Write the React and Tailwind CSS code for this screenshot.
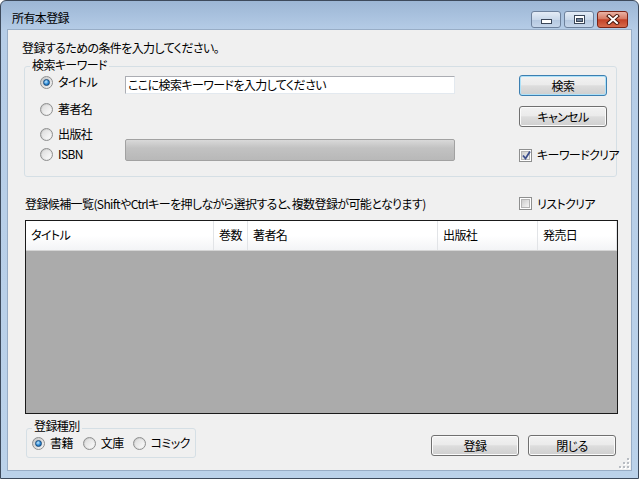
import React from 'react';

const COLUMNS = [
  { label: 'タイトル', w: 'w-[188px]' },
  { label: '巻数', w: 'w-[34px]' },
  { label: '著者名', w: 'w-[190px]' },
  { label: '出版社', w: 'w-[100px]' },
  { label: '発売日', w: 'flex-1' },
];

function Radio({ checked }) {
  return (
    <span className="flex h-[13px] w-[13px] shrink-0 items-center justify-center rounded-full border border-[#8e8f8f] bg-[linear-gradient(135deg,#c4c4c4,#f7f7f7)]">
      {checked ? (
        <span className="h-[7px] w-[7px] rounded-full border border-[#174a7c] bg-[radial-gradient(circle_at_40%_35%,#c4e8ff,#2b8ad6_55%,#0d4a8a)]" />
      ) : (
        <span className="h-[9px] w-[9px] rounded-full bg-[linear-gradient(135deg,#dcdcdc,#fbfbfb)]" />
      )}
    </span>
  );
}

function Check({ checked }) {
  return (
    <span className="flex h-[13px] w-[13px] shrink-0 items-center justify-center border border-[#8e8f8f] bg-white">
      <span className="relative flex h-[9px] w-[9px] items-center justify-center border border-[#b4b4b4] bg-[linear-gradient(135deg,#cdcdcd,#f5f5f5)]">
        {checked && (
          <svg width="11" height="11" viewBox="0 0 11 11" className="absolute -top-[2px] -left-[1px]">
            <path d="M2 5.5 L4.5 8.5 L9 1.5" fill="none" stroke="#3d4f8c" strokeWidth="1.8" />
          </svg>
        )}
      </span>
    </span>
  );
}

function Btn({ children, def }) {
  return (
    <div
      className={`flex h-[21px] w-[88px] shrink-0 items-center justify-center rounded-[3px] border bg-[linear-gradient(#f2f2f2,#ebebeb_45%,#dddddd_52%,#cfcfcf)] text-[12px] leading-none text-black ${
        def ? 'border-[#3c7fb1] shadow-[inset_0_0_0_1px_#aee1f8]' : 'border-[#707070] shadow-[inset_0_0_0_1px_#fbfbfb]'
      }`}
    >
      {children}
    </div>
  );
}

function CaptionButtons() {
  return (
    <div className="mt-[10px] flex gap-[3px] pr-[10px]">
      <div className="flex h-[17px] w-[30px] items-end justify-center rounded-[3px] border border-[#6d819c] bg-[linear-gradient(#e4ecf6,#c9d8ea_50%,#b3c7df_51%,#c6d6ea)] pb-[3px]">
        <svg width="11" height="5" viewBox="0 0 11 5">
          <rect x="0.5" y="0.5" width="10" height="4" fill="#fff" stroke="#3a4658" />
        </svg>
      </div>
      <div className="flex h-[17px] w-[30px] items-center justify-center rounded-[3px] border border-[#6d819c] bg-[linear-gradient(#e4ecf6,#c9d8ea_50%,#b3c7df_51%,#c6d6ea)]">
        <svg width="11" height="9" viewBox="0 0 11 9">
          <rect x="0.5" y="0.5" width="10" height="8" fill="#fff" stroke="#3a4658" />
          <rect x="2.5" y="3.5" width="6" height="3" fill="#6f8199" stroke="#3a4658" />
        </svg>
      </div>
      <div className="flex h-[17px] w-[31px] items-center justify-center rounded-[3px] border border-[#7b2417] bg-[linear-gradient(#eab3a5,#d77a64_45%,#c34227_52%,#d66a4c)]">
        <svg width="14" height="11" viewBox="0 0 14 11">
          <path d="M3 2 L11 9 M11 2 L3 9" stroke="#4a1509" strokeWidth="4" strokeLinecap="square" />
          <path d="M3 2 L11 9 M11 2 L3 9" stroke="#fff" strokeWidth="2" strokeLinecap="square" />
        </svg>
      </div>
    </div>
  );
}

export default function App() {
  return (
    <div
      className="flex h-[479px] w-[639px] flex-col overflow-hidden rounded-t-[6px] border border-[#3d4a5c] bg-[linear-gradient(#9cb6d5,#b6cde7_30px,#bbd2ea)] text-[12px] tracking-[-0.6px] whitespace-nowrap text-black [font-feature-settings:'palt']"
      style={{ fontFamily: '"Noto Sans CJK JP", "Noto Sans", sans-serif' }}
    >
      {/* Title bar */}
      <div className="flex h-[28px] shrink-0 items-start justify-between">
        <div className="pl-[11px] pt-[10px] text-[12px] leading-[14px]">所有本登録</div>
        <CaptionButtons />
      </div>

      {/* Client area */}
      <div className="ml-[6px] flex h-[442px] w-[625px] flex-col border border-[#98adc6] bg-[#f0f0f0]">
        <div className="pl-[14px] pt-[11px] leading-[14px]">登録するための条件を入力してください。</div>

        {/* Search group */}
        <div className="relative ml-[16px] mt-[11px] flex h-[112px] w-[593px] rounded-[3px] border border-[#d5dfe5]">
          <div className="absolute -top-[9px] left-[5px] bg-[#f0f0f0] px-[2px] leading-[14px]">検索キーワード</div>

          <div className="ml-[15px] flex w-[85px] shrink-0 flex-col">
            <div className="mt-[8px] flex h-[14px] items-center gap-[5px]"><Radio checked /><span>タイトル</span></div>
            <div className="mt-[13px] flex h-[14px] items-center gap-[5px]"><Radio /><span>著者名</span></div>
            <div className="mt-[11px] flex h-[14px] items-center gap-[5px]"><Radio /><span>出版社</span></div>
            <div className="mt-[6px] flex h-[14px] items-center gap-[5px]"><Radio /><span>ISBN</span></div>
          </div>

          <div className="flex w-[330px] shrink-0 flex-col">
            <div className="mt-[9px] flex h-[18px] items-center border border-[#abadb3] border-r-[#e3e9ef] border-b-[#e3e9ef] bg-white pl-[2px] leading-none">
              ここに検索キーワードを入力してください
            </div>
            <div className="mt-[45px] h-[22px] rounded-[2px] border border-[#a2a2a2] bg-[linear-gradient(#d9d9d9,#c2c2c2_40%,#b8b8b8)]" />
          </div>

          <div className="ml-[64px] flex w-[96px] shrink-0 flex-col">
            <div className="mt-[8px]"><Btn def>検索</Btn></div>
            <div className="mt-[10px]"><Btn>キャンセル</Btn></div>
            <div className="mt-[21px] flex h-[14px] items-center gap-[5px]"><Check checked /><span>キーワードクリア</span></div>
          </div>
        </div>

        {/* List header row */}
        <div className="mt-[19px] flex h-[16px] items-center">
          <div className="w-[511px] shrink-0 pl-[17px]">登録候補一覧(ShiftやCtrlキーを押しながら選択すると、複数登録が可能となります)</div>
          <div className="flex items-center gap-[5px]"><Check /><span>リストクリア</span></div>
        </div>

        {/* List view */}
        <div className="ml-[17px] mt-[8px] flex h-[196px] w-[593px] flex-col border border-[#1a1a1a] bg-[#ababab]">
          <div className="flex h-[30px] shrink-0 border-b border-[#d5d5d5] bg-[linear-gradient(#ffffff,#ffffff_50%,#f3f4f6)]">
            {COLUMNS.map((c) => (
              <div key={c.label} className={`${c.w} flex shrink-0 items-center border-r border-[#e2e4e7] pl-[5px]`}>
                {c.label}
              </div>
            ))}
          </div>
        </div>

        {/* Bottom row */}
        <div className="mt-[14px] flex items-start">
          <div className="relative ml-[18px] flex h-[30px] w-[170px] shrink-0 items-start rounded-[3px] border border-[#d5dfe5] pl-[5px]">
            <div className="absolute -top-[10px] left-[5px] bg-[#f0f0f0] px-[2px] leading-[14px]">登録種別</div>
            <div className="mt-[7px] flex h-[14px] items-center">
              <Radio checked /><span className="ml-[5px]">書籍</span>
              <span className="ml-[10px]"><Radio /></span><span className="ml-[5px]">文庫</span>
              <span className="ml-[9px]"><Radio /></span><span className="ml-[5px]">コミック</span>
            </div>
          </div>
          <div className="ml-[235px] mt-[7px] flex gap-[9px]">
            <Btn>登録</Btn>
            <Btn>閉じる</Btn>
          </div>
        </div>

        {/* Size grip */}
        <div className="mt-auto flex justify-end pb-[1px] pr-[1px]">
          <svg width="11" height="11" viewBox="0 0 11 11">
            {[[8, 0], [8, 4], [4, 4], [8, 8], [4, 8], [0, 8]].map(([x, y]) => (
              <g key={`${x}-${y}`}>
                <rect x={x + 1} y={y + 1} width="2" height="2" fill="#fff" />
                <rect x={x} y={y} width="2" height="2" fill="#b8bcc2" />
              </g>
            ))}
          </svg>
        </div>
      </div>
    </div>
  );
}
